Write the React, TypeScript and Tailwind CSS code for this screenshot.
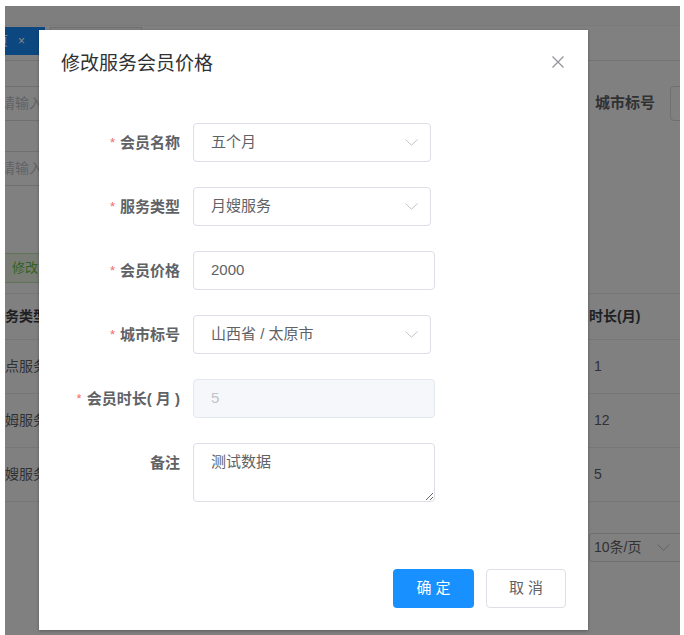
import React from "react";

const FONT = "font-['Liberation_Sans','Noto_Sans_CJK_SC',sans-serif]";

const Chevron = ({ color = "#c0c4cc" }: { color?: string }) => (
  <svg width="13" height="7" viewBox="0 0 13 7">
    <path d="M0.5 0.5 L6.5 6.2 L12.5 0.5" fill="none" stroke={color} strokeWidth="1" />
  </svg>
);

function Row({
  label,
  required = true,
  children,
}: {
  label: string;
  required?: boolean;
  children: React.ReactNode;
}) {
  return (
    <div className="flex items-start">
      <div className="w-[154px] shrink-0 pr-[13px] text-right text-[15px] leading-[39px] font-bold text-[#606266]">
        {required && <span className="mr-[5px] text-[13px] font-normal text-[#f56c6c] align-top">*</span>}
        {label}
      </div>
      {children}
    </div>
  );
}

function SelectBox({ value }: { value: string }) {
  return (
    <div className="flex h-[39px] w-[238px] items-center justify-between rounded-[4px] border border-[#dcdfe6] pl-[17px] pr-[12px] text-[15px] text-[#606266]">
      <span>{value}</span>
      <Chevron />
    </div>
  );
}

export default function App() {
  return (
    <div className={`h-[635px] w-[684px] bg-white pl-[5px] pr-[4px] pt-[6px] ${FONT}`}>
      <div className="relative h-[629px] w-[675px] overflow-hidden bg-[#808080]">
        {/* top header */}
        <div className="h-[20px] border-b border-[#7a7a7a] bg-[#7e7e7e]" />
        {/* tabs bar */}
        <div className="flex h-[35px] items-start gap-[5px] border-b border-[#747474] pt-[1px]">
          <div className="ml-[-35px] flex h-[28px] shrink-0 items-center bg-[#0c487f] pl-[12px] pr-[20px] text-[13px] text-[#8a8a8a]">
            <span>首页</span>
            <span className="ml-[10px] text-[12px]">×</span>
          </div>
          <div className="flex h-[28px] w-[92px] shrink-0 items-center border border-[#6e6f73] px-[10px] text-[13px] text-[#303133]">
            会员价格
          </div>
        </div>
        {/* search row 1 */}
        <div className="mt-[25px] flex h-[35px] items-center">
          <div className="ml-[-80px] flex h-[35px] w-[220px] shrink-0 items-center rounded-[4px] border border-[#6e6f73] pl-[75px] text-[14px] text-[#606266]">
            请输入会员名称
          </div>
          <div className="ml-[450px] w-[60px] shrink-0 text-[15px] font-bold text-[#303133]">城市标号</div>
          <div className="ml-[15px] h-[35px] w-[120px] shrink-0 rounded-[4px] border border-[#6e6f73]" />
        </div>
        {/* search row 2 */}
        <div className="mt-[30px] flex h-[35px] items-center">
          <div className="ml-[-80px] flex h-[35px] w-[220px] shrink-0 items-center rounded-[4px] border border-[#6e6f73] pl-[75px] text-[14px] text-[#606266]">
            请输入服务类型
          </div>
        </div>
        {/* green button */}
        <div className="mt-[67px] flex">
          <div className="ml-[-30px] flex h-[30px] w-[110px] shrink-0 items-center rounded-[3px] border border-[#617358] bg-[#787c75] pl-[36px] text-[13px] text-[#33611d]">
            修改
          </div>
        </div>
        {/* table */}
        <div className="mt-[10px] border-t border-[#75777a]">
          <div className="flex h-[46px] items-center border-b border-[#75777a] text-[14px] font-bold text-[#1f2022]">
            <div className="ml-[-14px] w-[120px] shrink-0">服务类型</div>
            <div className="ml-[478px] shrink-0">时长(月)</div>
          </div>
          {[
            ["钟点服务", "1"],
            ["保姆服务", "12"],
            ["月嫂服务", "5"],
          ].map(([a, b]) => (
            <div key={a} className="flex h-[54px] items-center border-b border-[#75777a] text-[14px] text-[#303133]">
              <div className="ml-[-14px] w-[120px] shrink-0">{a}</div>
              <div className="ml-[483px] shrink-0">{b}</div>
            </div>
          ))}
        </div>
        {/* pagination */}
        <div className="mt-[31px] flex">
          <div className="ml-[584px] flex h-[29px] w-[100px] shrink-0 items-center justify-between rounded-[3px] border border-[#6e6f73] pl-[4px] pr-[18px] text-[14px] text-[#303133]">
            <span>10条/页</span>
            <Chevron color="#606266" />
          </div>
        </div>

        {/* dialog */}
        <div className="absolute left-[34px] top-[24px] h-[600px] w-[549px] bg-white shadow-[0_1px_3px_rgba(0,0,0,0.3)]">
          <div className="relative pl-[22px] pt-[22px]">
            <div className="text-[19px] leading-[24px] text-[#303133]">修改服务会员价格</div>
            <div className="absolute right-[24px] top-[26px]">
              <svg width="12" height="12" viewBox="0 0 12 12">
                <path d="M0.5 0.5 L11.5 11.5 M11.5 0.5 L0.5 11.5" stroke="#909399" strokeWidth="1.2" fill="none" />
              </svg>
            </div>
          </div>
          <div className="mt-[47px] flex flex-col gap-[25px]">
            <Row label="会员名称">
              <SelectBox value="五个月" />
            </Row>
            <Row label="服务类型">
              <SelectBox value="月嫂服务" />
            </Row>
            <Row label="会员价格">
              <div className="flex h-[39px] w-[242px] items-center rounded-[4px] border border-[#dcdfe6] pl-[17px] text-[15px] text-[#606266]">
                2000
              </div>
            </Row>
            <Row label="城市标号">
              <SelectBox value="山西省 / 太原市" />
            </Row>
            <Row label="会员时长( 月 )">
              <div className="flex h-[39px] w-[242px] items-center rounded-[4px] border border-[#e4e7ed] bg-[#f5f7fa] pl-[17px] text-[15px] text-[#c0c4cc]">
                5
              </div>
            </Row>
            <Row label="备注" required={false}>
              <textarea
                readOnly
                defaultValue="测试数据"
                className={`h-[59px] w-[242px] resize-y rounded-[4px] border border-[#dcdfe6] px-[17px] pt-[7px] text-[15px] leading-[22px] text-[#606266] outline-none ${FONT}`}
              />
            </Row>
          </div>
          <div className="absolute bottom-[22px] right-[22px] flex gap-[12px]">
            <div className="flex h-[39px] w-[81px] items-center justify-center rounded-[4px] bg-[#1890ff] text-[15px] text-white">
              确 定
            </div>
            <div className="flex h-[39px] w-[80px] items-center justify-center rounded-[4px] border border-[#dcdfe6] bg-white text-[15px] text-[#606266]">
              取 消
            </div>
          </div>
        </div>
      </div>
    </div>
  );
}
